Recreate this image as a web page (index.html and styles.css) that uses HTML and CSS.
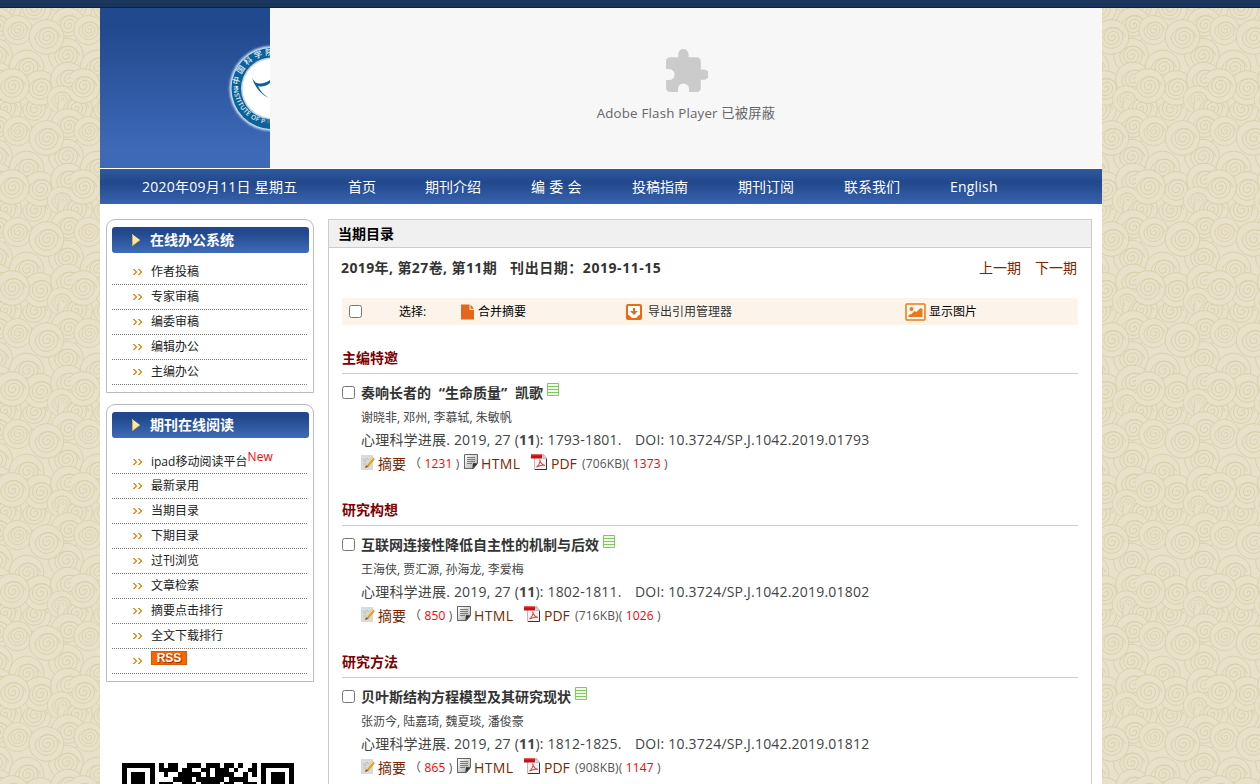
FILE: index.html
```html
<!DOCTYPE html>
<html lang="zh-CN">
<head>
<meta charset="utf-8">
<title>心理科学进展</title>
<link rel="stylesheet" href="styles.css">
</head>
<body>
<svg class="backdrop" width="1260" height="784" aria-hidden="true">
  <defs>
    <g id="swirl">
      <circle r="17.3"/>
      <path d="M0 0A1.9 1.9 0 0 1 3.8 0A3.8 3.8 0 0 1-3.8 0A5.7 5.7 0 0 1 7.6 0A7.6 7.6 0 0 1-7.6 0A9.5 9.5 0 0 1 11.4 0A11.4 11.4 0 0 1-11.4 0A13.3 13.3 0 0 1 14 0"/>
    </g>
    <g id="swirls">
      <use href="#swirl" x="68" y="25"/>
      <use href="#swirl" x="34" y="109"/>
      <use href="#swirl" x="4" y="108"/>
      <use href="#swirl" x="26.5" y="67.5"/>
      <use href="#swirl" x="66" y="55.5"/>
      <use href="#swirl" x="40" y="88"/>
      <use href="#swirl" x="12" y="86"/>
      <use href="#swirl" x="68" y="79.5"/>
      <use href="#swirl" transform="translate(61 99.5) scale(.8)"/>
      <use href="#swirl" transform="translate(17.5 30) scale(.85)"/>
      <use href="#swirl" x="46.5" y="37"/>
    </g>
    <pattern id="clouds" width="71" height="101" patternUnits="userSpaceOnUse">
      <rect width="71" height="101" fill="#e8e0c8"/>
      <g fill="#e8e0c8" stroke="#d7cfa8" stroke-width=".9">
        <use href="#swirls" x="-71" y="-101"/><use href="#swirls" y="-101"/><use href="#swirls" x="71" y="-101"/>
        <use href="#swirls" x="-71"/><use href="#swirls" x="71"/><use href="#swirls"/>
        <use href="#swirls" x="-71" y="101"/><use href="#swirls" y="101"/>
      </g>
    </pattern>
    <symbol id="arrows" viewBox="0 0 9 6"><path d="M0 0h2v1h1v1h1v2H3v1H2v1H0V5h1V4h1V2H1V1H0zM5 0h2v1h1v1h1v2H8v1H7v1H5V5h1V4h1V2H6V1H5z" fill="#e89426" shape-rendering="crispEdges"/></symbol>
    <symbol id="tri" viewBox="0 0 8 12"><path d="M0 0L8 6L0 12z" fill="#ffe9a0"/><path d="M0 0v12" stroke="#e3ad3c" stroke-width="2"/><path d="M0 12L8 6" stroke="#d9b050"/></symbol>
    <symbol id="lines" viewBox="0 0 12 13"><path d="M.5 .5h11v12H.5zM0 3.5h12M0 6.5h12M0 9.5h12" fill="#f2fbea" stroke="#7bcb5c"/></symbol>
    <linearGradient id="paper" x2="1" y2="1"><stop stop-color="#fff"/><stop offset="1" stop-color="#aaa"/></linearGradient>
    <symbol id="note" viewBox="0 0 14 15">
      <path d="M0 0h12v15H0z" fill="#d8dbda"/><path d="M2 4l2 3 2-4 2 2M2 9h3" stroke="#b4b8b7" stroke-width=".8" fill="none"/>
      <path d="M12.800 3.200L5.800 11.600" stroke="#dc9a2c" stroke-width="2.800"/><path d="M12 2.700L5.200 10.800" stroke="#ffe083" stroke-width="1"/><path d="M5 10l2 2-3 1z" fill="#75543a"/>
    </symbol>
    <symbol id="page" viewBox="0 0 14 16">
      <path d="M1 .7h12v9l-4 5H1z" fill="url(#paper)"/><path d="M.5 15V.5h13v9l-4 5H.5" fill="none" stroke="#666"/>
      <path d="M3 3.500h8M3 5.500h8M3 7.500h8M3 9.500h5" stroke="#777"/><path d="M13.700 9.500L9 9l-.7 6z" fill="#333"/>
    </symbol>
    <symbol id="pdf" viewBox="0 0 16 16">
      <path d="M3.500 1.500h9l3 3v11h-12z" fill="#f3f3f3" stroke="#bbb"/><path d="M4 15.500h11.500V5" fill="none" stroke="#333"/>
      <path d="M12 0v4.500h4z" fill="#ddd" stroke="#999" stroke-width=".6"/><path d="M0 .5h11v4H0z" fill="#c80f14"/><path d="M0 .5h11v1H0z" fill="#ec3030"/>
      <path d="M5.500 13c2-1 4-5 3.500-7-.7-1 0 4.500 5 5.500-2-.5-5-.2-8.500 1.500" fill="none" stroke="#df4545" stroke-width="1.100"/>
    </symbol>
  </defs>
  <rect width="1260" height="784" fill="url(#clouds)"/>
</svg>

<div class="topbar"></div>
<div class="site">
  <header class="banner">
    <div class="brand">
      <svg width="170" height="160" viewBox="100 8 170 160">
        <defs>
          <filter id="glow" x="-20%" y="-20%" width="140%" height="140%"><feGaussianBlur stdDeviation="1.3"/></filter>
          <path id="ringtop" d="M238.500 88A33 33 0 0 1 304.500 88"/>
          <path id="ringbottom" d="M233.500 86A38.500 38.500 0 0 0 310.500 86"/>
        </defs>
        <circle cx="272" cy="88.500" r="42.500" fill="#d5e6f5" filter="url(#glow)"/>
        <circle cx="272" cy="88.500" r="40.500" fill="#0b6298"/>
        <circle cx="272" cy="88.500" r="31" fill="#b9d4e4"/>
        <circle cx="272" cy="88.500" r="29.500" fill="#fff"/>
        <text class="seal-cn"><textPath href="#ringtop" startOffset="3">中国科学院</textPath></text>
        <text class="seal-en"><textPath href="#ringbottom" startOffset="0">INSTITUTE OF P</textPath></text>
        <circle cx="236.700" cy="87" r="1" fill="#fff"/>
        <path d="M252 77c2 8 11 8 18 3v3c-5 4-9 4-12 3 2 5 6 9 11 12-8-3-15-12-17-21z" fill="#0b6298"/>
        <text class="seal-year" x="257" y="120" transform="rotate(18 257 120)">—19</text>
      </svg>
    </div>
    <div class="flash">
      <svg width="44" height="44" viewBox="1 1 21.500 21.500"><path d="M20.500 11H19V7c0-1.100-.9-2-2-2h-4V3.500a2.500 2.500 0 0 0-5 0V5H4c-1.100 0-2 .9-2 2v3.800h1.500a2.700 2.700 0 0 1 0 5.400H2V20c0 1.100.9 2 2 2h3.800v-1.500a2.700 2.700 0 0 1 5.400 0V22H17c1.100 0 2-.9 2-2v-4h1.500a2.500 2.500 0 0 0 0-5z" fill="#cbcbcb"/></svg>
      <span>Adobe Flash Player 已被屏蔽</span>
    </div>
  </header>
  <nav class="nav">
    <span class="date">2020年09月11日 星期五</span>
    <a class="n1">首页</a><a class="n2">期刊介绍</a><a class="n3">编 委 会</a><a class="n4">投稿指南</a><a class="n5">期刊订阅</a><a class="n6">联系我们</a><a class="n7">English</a>
  </nav>
  <div class="columns">
    <aside class="sidebar">
      <section class="box">
        <h2><svg width="8" height="12"><use href="#tri"/></svg>在线办公系统</h2>
        <ul>
          <li><svg width="9" height="6"><use href="#arrows"/></svg>作者投稿</li>
          <li><svg width="9" height="6"><use href="#arrows"/></svg>专家审稿</li>
          <li><svg width="9" height="6"><use href="#arrows"/></svg>编委审稿</li>
          <li><svg width="9" height="6"><use href="#arrows"/></svg>编辑办公</li>
          <li><svg width="9" height="6"><use href="#arrows"/></svg>主编办公</li>
        </ul>
      </section>
      <section class="box">
        <h2><svg width="8" height="12"><use href="#tri"/></svg>期刊在线阅读</h2>
        <ul>
          <li class="tall"><svg width="9" height="6"><use href="#arrows"/></svg>ipad移动阅读平台<span class="new">New</span></li>
          <li><svg width="9" height="6"><use href="#arrows"/></svg>最新录用</li>
          <li><svg width="9" height="6"><use href="#arrows"/></svg>当期目录</li>
          <li><svg width="9" height="6"><use href="#arrows"/></svg>下期目录</li>
          <li><svg width="9" height="6"><use href="#arrows"/></svg>过刊浏览</li>
          <li><svg width="9" height="6"><use href="#arrows"/></svg>文章检索</li>
          <li><svg width="9" height="6"><use href="#arrows"/></svg>摘要点击排行</li>
          <li><svg width="9" height="6"><use href="#arrows"/></svg>全文下载排行</li>
          <li><svg width="9" height="6"><use href="#arrows"/></svg><span class="rss">RSS</span></li>
        </ul>
      </section>
      <svg class="qr" width="172" height="172" viewBox="0 0 37 37" shape-rendering="crispEdges">
        <path d="M0 0h7v7H0zM30 0h7v7h-7zM0 30h7v7H0z"/>
        <path d="M1 1h5v5H1zM31 1h5v5h-5zM1 31h5v5H1z" fill="#fff"/>
        <path d="M2 2h3v3H2zM32 2h3v3h-3zM2 32h3v3H2z"/>
        <path d="M8 0h1v1H8zM10 0h2v1h-2zM14 0h3v1h-3zM18 0h3v1h-3zM22 0h2v1h-2zM25 0h1v1h-1zM28 0h1v1h-1zM8 1h4v1H8zM13 1h2v1h-2zM17 1h2v1h-2zM20 1h3v1h-3zM24 1h1v1h-1zM27 1h2v1h-2zM9 2h1v1H9zM12 2h5v1h-5zM18 2h1v1h-1zM20 2h4v1h-4zM26 2h1v1h-1zM28 2h1v1h-1zM11 3h4v1h-4zM16 3h6v1h-6zM23 3h4v1h-4zM8 4h3v1H8zM13 4h3v1h-3zM17 4h4v1h-4zM22 4h2v1h-2zM26 4h3v1h-3z"/>
      </svg>
    </aside>
    <main class="panel">
      <h1>当期目录</h1>
      <div class="issue">
        <b>2019年, 第27卷, 第11期</b><b class="pub">刊出日期：2019-11-15</b>
        <span class="pager"><a>上一期</a><a>下一期</a></span>
      </div>
      <div class="tools">
        <input type="checkbox"><span class="pick">选择:</span>
        <span class="merge"><svg width="14" height="16" viewBox="0 0 14 16"><path d="M0 .5h8.500V6H13v9.500H0z" fill="#e2661b"/><path d="M9.500 .5L13 4.800H9.500z" fill="#e2661b"/></svg>合并摘要</span>
        <span class="export"><svg width="16" height="16" viewBox="0 0 16 16"><rect width="16" height="16" rx="2" fill="#f0690f"/><path d="M2 2h12v9h-1l-3 3H6l-3-3H2z" fill="#fff"/><path d="M7 4h2v3h3l-4 4-4-4h3z" fill="#f0690f"/></svg>导出引用管理器</span>
        <span class="images"><svg width="21" height="18" viewBox="0 0 21 18"><rect x="1" y="1" width="19" height="16" rx="1" fill="#fff6ea" stroke="#e7791f" stroke-width="1.500"/><circle cx="6.500" cy="6" r="2" fill="#e7791f"/><path d="M3.500 14v-2l3-1 3-3 2 1 4-4 2 1v8z" fill="#e7791f"/></svg>显示图片</span>
      </div>

      <section class="group">
        <h3>主编特邀</h3>
        <div class="title"><input type="checkbox"><b>奏响长者的<span class="q">“</span>生命质量<span class="q r">”</span>凯歌</b><svg width="12" height="13"><use href="#lines"/></svg></div>
        <p class="authors">谢晓非, 邓州, 李慕轼, 朱敏帆</p>
        <p class="cite"><span class="journal">心理科学进展. 2019, 27 (<b>11</b>): 1793-1801.</span><span class="doi">DOI: 10.3724/SP.J.1042.2019.01793</span></p>
        <div class="links"><svg width="14" height="15"><use href="#note"/></svg><a class="abs">摘要</a><small class="count">（ <i>1231</i> )</small><svg width="14" height="16"><use href="#page"/></svg><a class="html">HTML</a><svg width="16" height="16"><use href="#pdf"/></svg><a class="pdf">PDF</a><small class="size">(706KB)( <i>1373</i> )</small></div>
      </section>
      <section class="group">
        <h3>研究构想</h3>
        <div class="title"><input type="checkbox"><b>互联网连接性降低自主性的机制与后效</b><svg width="12" height="13"><use href="#lines"/></svg></div>
        <p class="authors">王海侠, 贾汇源, 孙海龙, 李爱梅</p>
        <p class="cite"><span class="journal">心理科学进展. 2019, 27 (<b>11</b>): 1802-1811.</span><span class="doi">DOI: 10.3724/SP.J.1042.2019.01802</span></p>
        <div class="links"><svg width="14" height="15"><use href="#note"/></svg><a class="abs">摘要</a><small class="count short">（ <i>850</i> )</small><svg width="14" height="16"><use href="#page"/></svg><a class="html">HTML</a><svg width="16" height="16"><use href="#pdf"/></svg><a class="pdf">PDF</a><small class="size">(716KB)( <i>1026</i> )</small></div>
      </section>
      <section class="group">
        <h3>研究方法</h3>
        <div class="title"><input type="checkbox"><b>贝叶斯结构方程模型及其研究现状</b><svg width="12" height="13"><use href="#lines"/></svg></div>
        <p class="authors">张沥今, 陆嘉琦, 魏夏琰, 潘俊豪</p>
        <p class="cite"><span class="journal">心理科学进展. 2019, 27 (<b>11</b>): 1812-1825.</span><span class="doi">DOI: 10.3724/SP.J.1042.2019.01812</span></p>
        <div class="links"><svg width="14" height="15"><use href="#note"/></svg><a class="abs">摘要</a><small class="count short">（ <i>865</i> )</small><svg width="14" height="16"><use href="#page"/></svg><a class="html">HTML</a><svg width="16" height="16"><use href="#pdf"/></svg><a class="pdf">PDF</a><small class="size">(908KB)( <i>1147</i> )</small></div>
      </section>
    </main>
  </div>
</div>
</body>
</html>
```
FILE: styles.css
```css
* { box-sizing: border-box; }
html, body { height: 784px; overflow: hidden; }
body {
  margin: 0;
  background: #e8e0c8;
  color: #444;
  font: 14px/20px "Open Sans", "Noto Sans CJK SC", sans-serif;
}
h1, h2, h3, p, ul { margin: 0; padding: 0; }
ul { list-style: none; }
svg { flex: none; display: block; }
i { font-style: normal; color: #f00; }
input { flex: none; width: 13px; height: 13px; margin: 0; }

.backdrop { position: absolute; inset: 0; z-index: -1; }
.topbar { height: 8px; background: #1a365c; border-bottom: 1px solid #0b2042; }
.site { width: 1002px; height: 776px; margin-left: 100px; background: #fff; overflow: hidden; }

.banner { display: flex; height: 160px; }
.brand { width: 170px; background: linear-gradient(#21498e 12%, #3d69b7 88%); }
.seal-cn { font: 500 8px "Noto Sans CJK SC", sans-serif; fill: #e5f1f8; letter-spacing: 2.6px; }
.seal-en { font: 600 6.5px "Open Sans", sans-serif; fill: #e5f1f8; letter-spacing: .35px; }
.seal-year { font: bold 6px "Open Sans", sans-serif; fill: #5b7f98; }
.flash {
  flex: 1;
  display: flex;
  flex-direction: column;
  align-items: center;
  padding-top: 41px;
  gap: 10px;
  background: #f7f7f7;
  color: #666;
  font-size: 13.3px;
  letter-spacing: .2px;
}

.nav {
  display: flex;
  align-items: center;
  height: 35px;
  margin-top: 1px;
  padding-left: 42px;
  background: linear-gradient(#2f599f, #22488b 38%, #3763af);
  color: #fff;
  white-space: nowrap;
}
.date { width: 206px; font-size: 14px; letter-spacing: .25px; }
.n1 { width: 77px; }
.n2, .n4, .n5, .n6 { width: 106px; }
.n3 { width: 101px; letter-spacing: .3px; }
.n7 { letter-spacing: .2px; }

.columns { display: flex; padding-top: 15px; }
.sidebar { width: 208px; margin: 0 14px 0 6px; }
.box { padding: 7px 4px 7px 5px; margin-bottom: 11px; border: 1px solid #bbb; border-radius: 9px 9px 0 0; }
.box h2 {
  display: flex;
  align-items: center;
  gap: 10px;
  height: 26px;
  padding-left: 20px;
  border-radius: 3px;
  background: linear-gradient(#21488c 20%, #3f6bb9);
  color: #fff;
  font-size: 14px;
}
.box ul { padding-top: 7px; width: 195px; }
.box li {
  display: flex;
  align-items: center;
  gap: 9px;
  height: 25px;
  padding-left: 21px;
  border-bottom: 1px dotted #777;
  color: #222;
  font-size: 12px;
  line-height: 24px;
}
.box .tall { height: 29px; padding-top: 5px; }
.new { margin: -9px 0 0 -9px; color: #f00; letter-spacing: .2px; }
.rss {
  width: 36px;
  height: 14px;
  margin-top: -6px;
  background: #fb6500;
  border: 1px solid #d85a08;
  color: #fff;
  font: bold 12px/12px "Liberation Sans", sans-serif;
  text-align: center;
  text-shadow: 1px 1px 1px #803000;
}
.qr { margin: 81px 0 0 16px; }

.panel { width: 764px; border: 1px solid #ccc; height: 620px; }
.panel h1 {
  height: 28px;
  padding-left: 9px;
  background: #f0f0f0;
  border-bottom: 1px solid #ccc;
  color: #000;
  font-size: 14px;
  line-height: 27px;
}
.issue { display: flex; height: 40px; padding: 0 14px 0 12px; color: #333; line-height: 39px; font-size: 14px; letter-spacing: .4px; }
.pub { margin-left: 13px; letter-spacing: .55px; }
.pager { display: flex; gap: 14px; margin-left: auto; color: #7a2600; letter-spacing: 0; }
.tools {
  display: flex;
  align-items: center;
  height: 27px;
  margin: 10px 13px 21px;
  padding-left: 7px;
  background: #fcf4ea;
  color: #000;
  font-size: 12px;
}
.tools span { display: flex; align-items: center; gap: 3px; }
.pick { width: 62px; margin-left: 37px; }
.merge { width: 165px; }
.tools .export { width: 279px; gap: 6px; color: #333; }

.group { height: 152px; padding: 0 13px; }
.group h3 { height: 28px; border-bottom: 1px solid #ccc; color: #7d0000; font-size: 14px; line-height: 24px; }
.title { display: flex; align-items: center; height: 36px; color: #333; }
.title b { margin: 1px 4px 0 6px; }
.title svg { margin-top: -6px; }
.q { display: inline-block; width: 14px; text-align: right; }
.r { text-align: left; }
.authors { height: 18px; padding-left: 19px; margin-top: -1px; font-size: 12px; line-height: 18px; }
.cite { display: flex; height: 27px; padding-left: 19px; line-height: 25px; white-space: nowrap; letter-spacing: .2px; }
.journal { width: 274px; }
.links { display: flex; align-items: center; height: 20px; padding-left: 19px; color: #7a2600; white-space: nowrap; }
.links svg { margin-top: -4px; }
.links small { font-size: 12px; color: #555; letter-spacing: .15px; }
.abs { width: 31px; margin-left: 3px; }
.links .count { width: 55px; }
.links .short { width: 48px; }
.html { width: 50px; margin-left: 3px; letter-spacing: .4px; }
.pdf { width: 31px; margin-left: 4px; }
```
